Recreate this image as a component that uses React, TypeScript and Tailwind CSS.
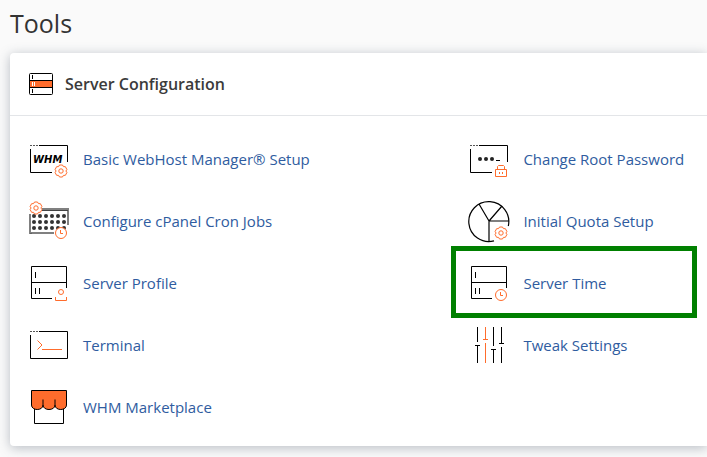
import React from "react";

const ORANGE = "#ff6c2c";

function Gear({ x, y }: { x: number; y: number }) {
  return (
    <g transform={`translate(${x} ${y})`} stroke={ORANGE}>
      <path
        d="M-1.5-6h3l.9 1.6 2 .1 1.5 2.8-1 1.5 1 1.5-1.5 2.8-2 .1L1.5 6h-3l-.9-1.6-2-.1-1.5-2.8 1-1.5-1-1.5 1.5-2.8 2-.1z"
        fill="#fff"
      />
      <circle r="2.2" />
    </g>
  );
}

function Clock() {
  return (
    <g stroke={ORANGE}>
      <circle cx="33" cy="33" r="5.5" fill="#fff" />
      <path d="M32.5 30v3.5H35" />
    </g>
  );
}

function WindowFrame() {
  return (
    <>
      <path d="M2 7.5h2M5 7.5h2M8 7.5h2" stroke="#555" />
      <path d="M11 7.5h28.5V24M2.5 11v23.5H24" />
    </>
  );
}

function ServerFrame() {
  return (
    <path d="M38.5 26V4.5h-35v32H24M3.5 20.5h35M7.5 10v6M7.5 26v6M11.5 26v6" />
  );
}

const icons = {
  whm: (
    <>
      <WindowFrame />
      <text
        x="5"
        y="25"
        fill="#000"
        stroke="none"
        className="font-['DejaVu_Sans',sans-serif] text-[10px] font-bold italic"
      >
        WHM
      </text>
      <Gear x={33} y={33} />
    </>
  ),
  password: (
    <>
      <WindowFrame />
      <g fill="#222" stroke="none">
        <circle cx="12" cy="21" r="2" />
        <circle cx="18" cy="21" r="2" />
        <circle cx="24" cy="21" r="2" />
      </g>
      <path d="M28 22.5h4" />
      <path
        d="M27.5 31.5h11v7h-11zM29.5 31v-2.5l1-1h5l1 1V31M31.5 34v2M34.5 34v2"
        stroke={ORANGE}
      />
    </>
  ),
  cron: (
    <>
      <path d="M14 9h26v16M2 14v19h24" stroke="#808080" strokeWidth="2" />
      <path d="M14 10.5h26M2.5 33.5h1" stroke="#444" />
      <g fill="#333" stroke="none">
        {[16, 22, 28].map((y) =>
          [6, 12, 18, 24, 30, 36].map((x) => (
            <circle key={`${x}-${y}`} cx={x} cy={y} r="2" />
          ))
        )}
      </g>
      <Gear x={8} y={8} />
      <Clock />
    </>
  ),
  quota: (
    <>
      <path d="M26 40.9A20 20 0 1 1 40.3 26" strokeWidth="1.2" />
      <path d="M21 41V21h20M21 21 11 4M21 21 34 6" strokeWidth="1.2" />
      <Gear x={33} y={33} />
    </>
  ),
  profile: (
    <>
      <ServerFrame />
      <g stroke={ORANGE}>
        <circle cx="33" cy="30" r="2.5" />
        <path d="M27.5 35v3.5h11V35" />
      </g>
    </>
  ),
  time: (
    <>
      <ServerFrame />
      <Clock />
    </>
  ),
  terminal: (
    <>
      <path d="M2 7.5h2M5 7.5h2M8 7.5h2" stroke="#555" />
      <path d="M11 7.5h28.5v27h-37V11" />
      <path d="m9.5 16.5 4.5 4.5-4.5 4.5M14 25.5h20" stroke={ORANGE} />
    </>
  ),
  tweak: (
    <>
      <path d="M9.5 3v15M7 21.5h5M9.5 21.5V39M25.5 3v19M23 25.5h5M25.5 25.5V39M33.5 3v16.5M31 19.5h5M33.5 23v16" />
      <path d="M17.5 3v12.5M15 15.5h5M17.5 19v20" stroke={ORANGE} />
    </>
  ),
  market: (
    <>
      <path d="M6.5 22v15.5h29V22" />
      <path
        d="M3.5 4.5h35V19c0 6-11.5 6-11.5 0 0 6-12 6-12 0 0 6-11.5 6-11.5 0z"
        fill={ORANGE}
      />
      <path d="M15 13.5V19M27 13.5V19" />
    </>
  ),
};

type Tool = { name: string; icon: keyof typeof icons; highlighted?: boolean };

const tools: Tool[] = [
  { name: "Basic WebHost Manager® Setup", icon: "whm" },
  { name: "Change Root Password", icon: "password" },
  { name: "Configure cPanel Cron Jobs", icon: "cron" },
  { name: "Initial Quota Setup", icon: "quota" },
  { name: "Server Profile", icon: "profile" },
  { name: "Server Time", icon: "time", highlighted: true },
  { name: "Terminal", icon: "terminal" },
  { name: "Tweak Settings", icon: "tweak" },
  { name: "WHM Marketplace", icon: "market" },
];

function ToolLink({ name, icon, highlighted }: Tool) {
  return (
    <li className="relative">
      <a
        href="#"
        className="flex h-[62px] items-center gap-[11px] text-[15px] text-[#2f5ca0] whitespace-nowrap hover:underline"
      >
        <svg
          className="size-11 shrink-0"
          viewBox="0 0 44 44"
          fill="none"
          stroke="#000"
          aria-hidden="true"
        >
          {icons[icon]}
        </svg>
        <span className="pb-0.5 leading-6">{name}</span>
      </a>
      {highlighted && (
        <div className="pointer-events-none absolute -top-[7px] -bottom-[3px] -left-[17px] right-[10px] border-5 border-[#008000]" />
      )}
    </li>
  );
}

function App() {
  return (
    <main className="min-h-screen overflow-hidden bg-[#fafafa] pl-[10px] pb-3 font-['Open_Sans','Noto_Sans',sans-serif]">
      <h1 className="pt-[3px] pb-[10px] text-[25px] leading-10 text-[#333]">
        Tools
      </h1>
      <section className="rounded-l bg-white shadow-[0_2px_12px_rgba(60,75,95,0.35)]">
        <header className="flex h-[63px] items-center gap-3 border-b border-[#e3e5e8] pl-[19px]">
          <svg
            className="h-[22px] w-6"
            viewBox="0 0 24 22"
            fill="none"
            stroke="#000"
            aria-hidden="true"
          >
            <path d="M.5 7.5h23v7H.5z" fill={ORANGE} />
            <rect x=".5" y=".5" width="23" height="21" rx="1" />
            <path d="M3.5 2v4M3.5 16v4" />
            <path d="M3.5 9v4M5.5 9v4" stroke="#fff" />
          </svg>
          <h2 className="text-base font-semibold text-[#3b3b3b]">
            Server Configuration
          </h2>
        </header>
        <ul className="grid grid-cols-[24fr_13fr] pt-[13px] pb-[7px] pl-[18px]">
          {tools.map((tool) => (
            <ToolLink key={tool.name} {...tool} />
          ))}
        </ul>
      </section>
    </main>
  );
}

export default App;
